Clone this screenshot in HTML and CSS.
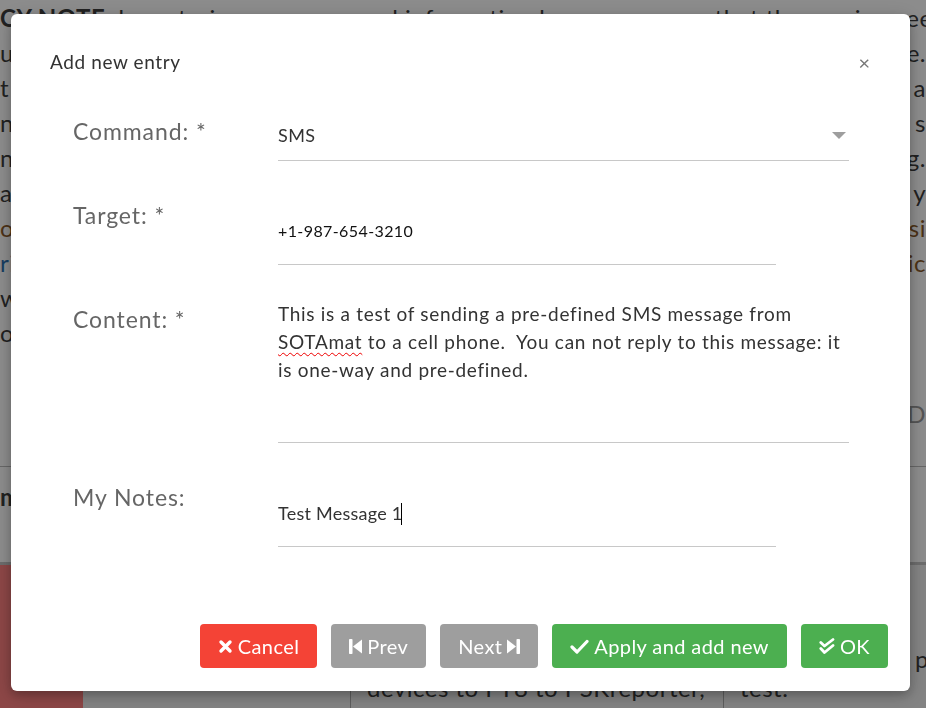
FILE: index.html
```html
<!DOCTYPE html>
<html lang="en">

<head>
  <meta charset="UTF-8">
  <meta name="viewport" content="width=device-width, initial-scale=1.0">
  <title>Add new entry</title>
  <link rel="stylesheet" href="styles.css">
</head>

<body>
  <!-- page behind the dialog -->
  <div class="page">
    <div class="notice">
      <p><span><b>CY NOTE:</b> by entering your personal information here, you agree that the service need</span></p>
      <p><span>u</span><span>e.</span></p>
      <p><span>t</span><span><span class="link">l</span> a</span></p>
      <p><span>n</span><span>s</span></p>
      <p><span>n</span><span>g.</span></p>
      <p><span>a</span><span>y</span></p>
      <p><span class="warm">o</span><span class="warm">si</span></p>
      <p><span class="link">ri</span><span class="warm">ic</span></p>
      <p><span>w</span><span></span></p>
      <p><span>o</span><span></span></p>
    </div>
    <div class="tools"><span class="faint">D</span></div>
    <div class="heading"><b>m</b></div>
    <div class="table-row">
      <div class="cell red"></div>
      <div class="cell"></div>
      <div class="cell text">devices to FT8 to PSKreporter,</div>
      <div class="cell text">test.</div>
      <div class="cell small">p</div>
    </div>
  </div>

  <div class="overlay">
    <div class="modal">
      <header>
        <h2>Add new entry</h2>
        <span class="close">&times;</span>
      </header>

      <form>
        <div class="row">
          <label>Command: *</label>
          <div class="field select">
            <span>SMS</span>
            <svg class="caret" width="14" height="7" viewBox="0 0 14 7"><path d="M0 0 H14 L7 7 Z" fill="#9e9e9e"/></svg>
          </div>
        </div>
        <div class="row">
          <label>Target: *</label>
          <div class="field input short phone">+1-987-654-3210</div>
        </div>
        <div class="row">
          <label>Content: *</label>
          <div class="field area">This is a test of sending a pre-defined SMS message from<br><span class="typo">SOTAmat</span> to a cell phone.&nbsp; You can not reply to this message: it<br>is one-way and pre-defined.</div>
        </div>
        <div class="row">
          <label>My Notes:</label>
          <div class="field input short">Test Message 1<span class="cursor"></span></div>
        </div>
      </form>

      <div class="actions">
        <button class="btn red-btn" type="button">
          <svg width="15" height="15" viewBox="0 0 15 15"><path d="M3 3 L12 12 M12 3 L3 12" stroke="#fff" stroke-width="3.4" stroke-linecap="round"/></svg>Cancel
        </button>
        <button class="btn grey-btn" type="button">
          <svg width="13" height="17" viewBox="0 0 13 17"><rect x="0" y="1" width="3.5" height="15" rx="0.8" fill="#fff"/><path d="M13 1.5 V15.5 L4 8.5 Z" fill="#fff"/></svg>Prev
        </button>
        <button class="btn grey-btn" type="button">
          Next<svg width="13" height="17" viewBox="0 0 13 17"><rect x="9.5" y="1" width="3.5" height="15" rx="0.8" fill="#fff"/><path d="M0 1.5 V15.5 L9 8.5 Z" fill="#fff"/></svg>
        </button>
        <button class="btn green-btn" type="button">
          <svg width="19" height="15" viewBox="0 0 19 15"><path d="M2 8 L7 13 L17 2.5" stroke="#fff" stroke-width="3.2" fill="none" stroke-linecap="round" stroke-linejoin="round"/></svg>Apply and add new
        </button>
        <button class="btn green-btn" type="button">
          <svg width="16" height="17" viewBox="0 0 16 17"><path d="M1.8 4.5 L5.5 8 L14 1.5 M1.8 10.5 L5.5 14.5 L14 7.5" stroke="#fff" stroke-width="2.8" fill="none" stroke-linecap="round" stroke-linejoin="round"/></svg>OK
        </button>
      </div>
    </div>
  </div>
</body>

</html>
```

FILE: styles.css
```css
* {
  box-sizing: border-box;
}

body {
  margin: 0;
  height: 708px;
  overflow: hidden;
  font-family: Lato, "Open Sans", sans-serif;
  color: #333;
}

/* page behind */

.page {
  height: 708px;
  display: flex;
  flex-direction: column;
  background: #fff;
  color: #3c3c3c;
  font-size: 24px;
  letter-spacing: 0.5px;
}

.notice {
  height: 350px;
}

.notice p {
  margin: 0;
  height: 35px;
  line-height: 35px;
  display: flex;
  justify-content: space-between;
  white-space: nowrap;
  overflow: hidden;
}

.link {
  color: #2a6fb0;
}

.warm {
  color: #8a5a2a;
}

.tools {
  height: 117px;
  display: flex;
  justify-content: flex-end;
  align-items: center;
  padding-top: 10px;
  border-bottom: 1px solid #bbb;
}

.faint {
  color: #999;
}

.heading {
  height: 95px;
  padding-top: 12px;
  line-height: 35px;
}

.table-row {
  flex: 1;
  display: grid;
  grid-template-columns: 83px 267px 373px 185px 1fr;
  background: #eee;
  border-top: 3px solid #c4c4c4;
}

.cell.red {
  background: #ff8080;
}

.cell.text {
  border-left: 1px solid #aaa;
  padding: 106px 0 0 16px;
  line-height: 34px;
  white-space: nowrap;
  overflow: hidden;
}

.cell.small {
  padding: 77px 0 0 7px;
  line-height: 34px;
}

/* dialog */

.overlay {
  position: fixed;
  top: 0;
  left: 0;
  right: 0;
  bottom: 0;
  background: rgba(0, 0, 0, 0.45);
  padding: 14px 0 0 11px;
}

.modal {
  width: 899px;
  height: 677px;
  background: #fff;
  border-radius: 6px;
  box-shadow: 0 4px 10px 0 rgba(0, 0, 0, 0.2), 0 4px 20px 0 rgba(0, 0, 0, 0.19);
  display: flex;
  flex-direction: column;
  letter-spacing: 0;
}

header {
  display: flex;
  justify-content: space-between;
  align-items: center;
  padding: 36px 40px 0 39px;
}

h2 {
  margin: 0;
  font-size: 19px;
  line-height: 24px;
  font-weight: normal;
  letter-spacing: 0.6px;
  color: #333;
}

.close {
  font-size: 20px;
  line-height: 24px;
  color: #777;
}

form {
  padding: 36px 61px 0 62px;
}

.row {
  display: grid;
  grid-template-columns: 205px 1fr;
  align-items: start;
  margin-bottom: 33px;
}

label {
  font-size: 23px;
  line-height: 42px;
  letter-spacing: 0.9px;
  color: #666;
}

.field {
  border-bottom: 1px solid #c8c8c8;
  color: #333;
  font-size: 18px;
}

.select {
  height: 51px;
  display: flex;
  justify-content: space-between;
  align-items: center;
  padding: 0 3px 0 0;
  letter-spacing: 0.4px;
}

.input {
  height: 71px;
  padding-top: 26px;
  line-height: 22px;
  letter-spacing: 0.25px;
}

.short {
  width: 498px;
}

.phone {
  font-size: 16px;
  letter-spacing: 0.4px;
  color: #111;
}

.area {
  height: 145px;
  padding-top: 2px;
  font-size: 19px;
  line-height: 28px;
  letter-spacing: 0.7px;
}

.typo {
  text-decoration: underline wavy #e00;
  text-decoration-thickness: 1px;
  text-underline-offset: 3px;
}

.cursor {
  display: inline-block;
  width: 1px;
  height: 22px;
  background: #000;
  vertical-align: -5px;
  margin-left: -2px;
}

.actions {
  margin-top: auto;
  display: flex;
  justify-content: flex-end;
  gap: 14px;
  padding: 0 22px 23px 0;
}

.btn {
  height: 44px;
  padding: 0 18px;
  border: none;
  border-radius: 4px;
  font-family: Lato, "Open Sans", sans-serif;
  font-size: 20px;
  letter-spacing: 0.4px;
  color: #fff;
  display: inline-flex;
  align-items: center;
  gap: 5px;
}

.red-btn {
  background: #f44336;
}

.grey-btn {
  background: #9e9e9e;
}

.green-btn {
  background: #4caf50;
}
```
